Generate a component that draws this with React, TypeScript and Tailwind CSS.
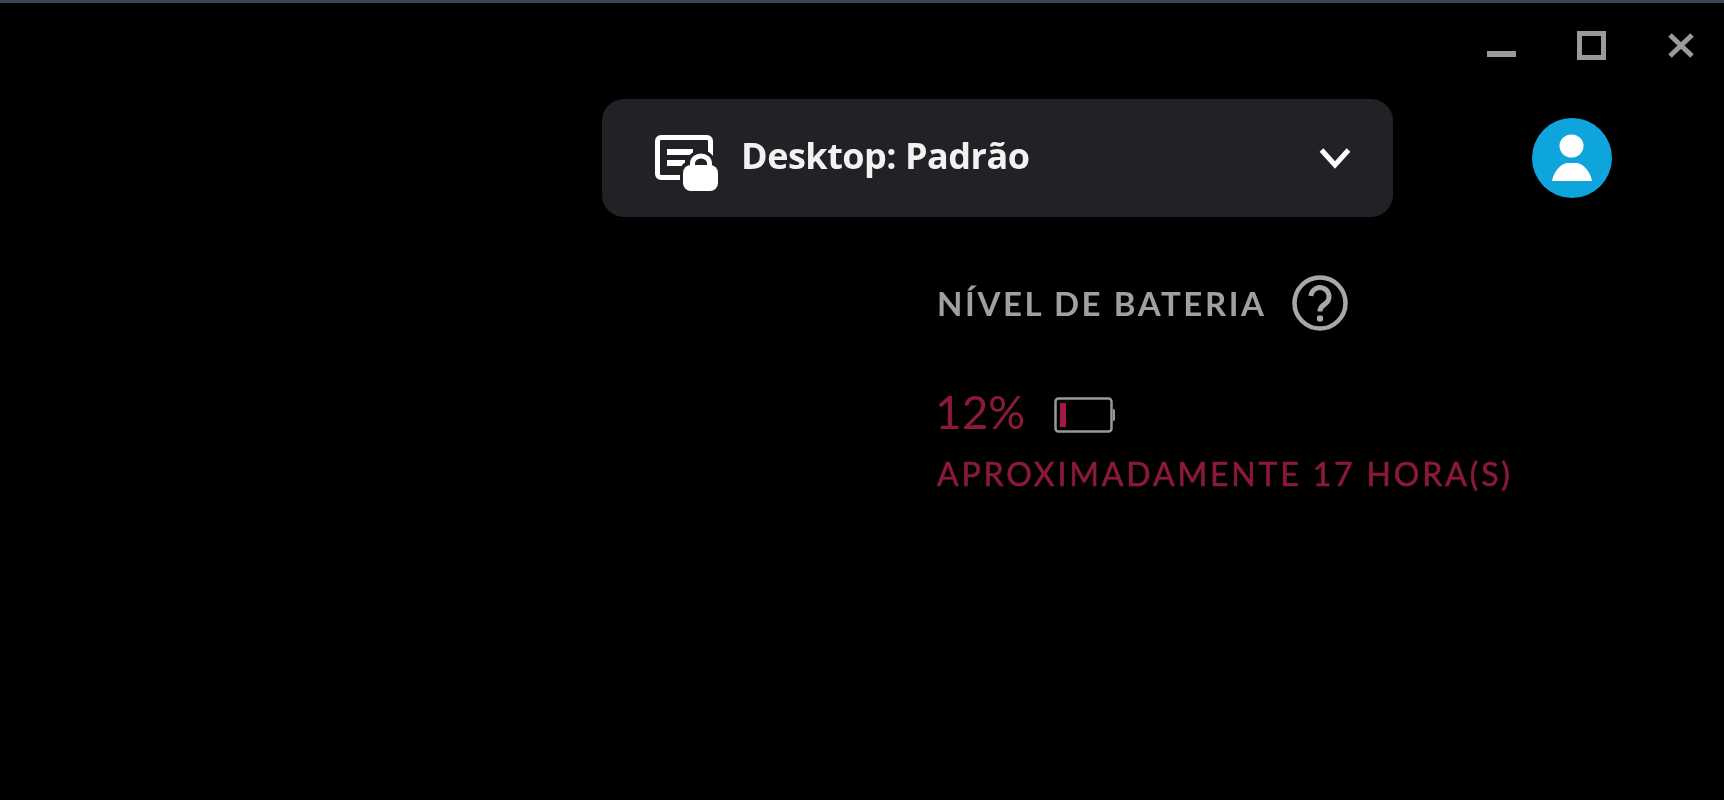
export default function App() {
  return (
    <div className="w-[1724px] h-[800px] bg-black border-t-[3px] border-[#3b4552] overflow-hidden font-['Lato',sans-serif]">
      <div className="flex justify-end gap-[60px] pt-[27px] pr-[27px]">
        <svg width="30" height="30" viewBox="0 0 30 30" className="text-[#9a9a9a]">
          <rect x="0" y="21" width="29" height="6" fill="currentColor" />
        </svg>
        <svg width="30" height="30" viewBox="0 0 30 30" className="text-[#9a9a9a]">
          <rect x="2.5" y="3.5" width="24" height="24" fill="none" stroke="currentColor" strokeWidth="5" />
        </svg>
        <svg width="30" height="30" viewBox="0 0 30 30" className="text-[#9a9a9a]">
          <path d="M3 5 L25 26 M25 5 L3 26" fill="none" stroke="currentColor" strokeWidth="5" />
        </svg>
      </div>
      <div className="flex items-center gap-[139px] ml-[602px] mt-[39px]">
        <div className="flex items-center w-[791px] h-[118px] rounded-[22px] bg-[#212226] pl-[53px] pr-[42px]">
          <svg width="64" height="56" viewBox="0 0 64 56" className="text-white shrink-0 mt-[9px]">
            <path d="M34 42.5 H6 a3.5 3.5 0 0 1 -3.5 -3.5 V6 a3.5 3.5 0 0 1 3.5 -3.5 H52 a3.5 3.5 0 0 1 3.5 3.5 V22" fill="none" stroke="currentColor" strokeWidth="5" />
            <rect x="12" y="14" width="26" height="6" fill="currentColor" />
            <rect x="12" y="25" width="18" height="6" fill="currentColor" />
            <path d="M37 31 v-3 a9 8 0 0 1 18 0 v3" fill="none" stroke="#212226" strokeWidth="10" />
            <rect x="25" y="26" width="41" height="33" rx="10" fill="#212226" />
            <path d="M37.5 31 v-2.5 a8.5 7.5 0 0 1 17 0 v2.5" fill="none" stroke="currentColor" strokeWidth="5" />
            <rect x="28" y="30" width="35" height="26" rx="8" fill="currentColor" />
          </svg>
          <span className="ml-[22px] -mt-[4px] text-[36px] font-bold tracking-[-0.5px] leading-none whitespace-nowrap text-[#f2f2f2] blur-[0.5px] font-['Open_Sans',sans-serif]">Desktop: Padrão</span>
          <svg width="32" height="22" viewBox="0 0 32 22" className="ml-auto text-white">
            <path d="M2.5 3 L16 18 L29.5 3" fill="none" stroke="currentColor" strokeWidth="5" />
          </svg>
        </div>
        <div className="flex items-center justify-center w-[80px] h-[80px] rounded-full bg-[#0ea5dc]">
          <svg width="48" height="56" viewBox="0 0 48 56" className="text-white">
            <ellipse cx="23.5" cy="16" rx="12" ry="11.5" fill="currentColor" />
            <path d="M4 51 C6 40 14 33 20 33 H28 C34 33 42 40 44 51 Z" fill="currentColor" />
          </svg>
        </div>
      </div>
      <div className="ml-[937px] mt-[58px]">
        <div className="flex items-center gap-[25px] h-[56px]">
          <span className="text-[33px] font-bold tracking-[2.6px] leading-none text-[#a0a0a0] blur-[0.5px]">NÍVEL DE BATERIA</span>
          <svg width="56" height="56" viewBox="0 0 56 56" className="text-[#a8a8a8]">
            <circle cx="28" cy="28" r="25.5" fill="none" stroke="currentColor" strokeWidth="4.5" />
            <path d="M19 21 a9 9 0 1 1 14 8 c-3.5 2 -5 3.5 -5 7.5" fill="none" stroke="currentColor" strokeWidth="5" />
            <circle cx="28" cy="43.5" r="3.2" fill="currentColor" />
          </svg>
        </div>
        <div className="flex items-center gap-[29px] mt-[58px] h-[46px] -ml-[2px]">
          <span className="text-[46px] leading-none text-[#8a1a38] blur-[0.4px]">12%</span>
          <svg width="61" height="36" viewBox="0 0 61 36" className="mt-[6px]">
            <rect x="1.5" y="1.5" width="56" height="33" rx="3" fill="none" stroke="#999999" strokeWidth="2.5" />
            <rect x="6" y="6" width="6" height="24" fill="#a01c44" />
            <path d="M59 12 h0.5 a1.5 2 0 0 1 1.5 2 v8 a1.5 2 0 0 1 -1.5 2 h-0.5 Z" fill="#999999" />
          </svg>
        </div>
        <div className="mt-[23px] text-[32px] leading-none tracking-[2.85px] whitespace-nowrap text-[#8a1a38] blur-[0.4px] [-webkit-text-stroke:0.6px_#8a1a38]">APROXIMADAMENTE 17 HORA(S)</div>
      </div>
    </div>
  );
}
